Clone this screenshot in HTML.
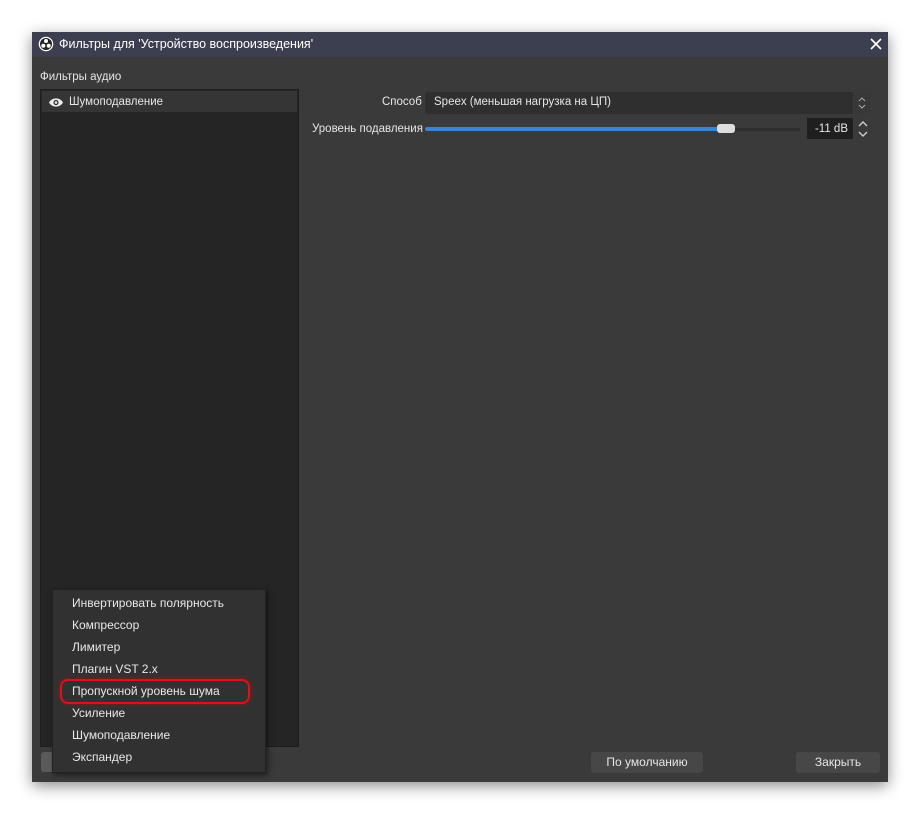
<!DOCTYPE html>
<html><head><meta charset="utf-8"><style>
body{margin:0;width:920px;height:815px;background:#fff;position:relative;overflow:hidden;font-family:"Liberation Sans","Noto Sans CJK SC",sans-serif;font-size:12px;color:#e6e6e6}
.a{position:absolute}
.win{left:32px;top:32px;width:856px;height:750px;background:#3a3a3a;box-shadow:0 4px 14px rgba(0,0,0,.45)}
.title{left:0;top:0;width:856px;height:25px;background:#3c3f4f;color:#fff;font-size:12.5px}
.list{left:8px;top:57px;width:257px;height:656px;background:#252525;border:1px solid #1e1e1e}
.item{left:1px;top:1px;width:255px;height:21px;background:#353535}
.combo{left:393px;top:60px;width:446px;height:22px;background:#2f2f2f;border-radius:3px}
.btn{background:#474747;border-radius:3px;text-align:center;line-height:21px;height:21px}
.menu{left:52px;top:589px;width:212px;height:182px;background:#313131;border:1px solid #222;box-shadow:2px 2px 5px rgba(0,0,0,.5)}
.menu div{position:absolute;left:19px;font-size:12px;color:#e8e8e8}
</style></head><body>
<div class="a win">
 <div class="a title">
  <svg class="a" style="left:6px;top:4px" width="16" height="16" viewBox="0 0 16 16"><circle cx="8" cy="8" r="7.3" fill="#fff"/><circle cx="8" cy="8" r="6" fill="#222"/><circle cx="8" cy="5" r="2" fill="#fff"/><circle cx="5.3" cy="9.8" r="2" fill="#fff"/><circle cx="10.7" cy="9.8" r="2" fill="#fff"/></svg>
  <span class="a" style="left:27px;top:5px">Фильтры для 'Устройство воспроизведения'</span>
  <svg class="a" style="left:838px;top:6px" width="12" height="12"><path d="M1 1L11 11M11 1L1 11" stroke="#fff" stroke-width="1.6"/></svg>
 </div>
 <span class="a" style="left:8px;top:39px;font-size:11.5px">Фильтры аудио</span>
 <div class="a list"><div class="a item">
  <svg class="a" style="left:6px;top:6px" width="16" height="11" viewBox="0 0 16 11"><path d="M1 5.5C4 0 12 0 15 5.5C12 11 4 11 1 5.5Z" fill="#eee"/><circle cx="8" cy="5.5" r="2.6" fill="#353535"/><circle cx="8" cy="5.5" r="1.3" fill="#eee"/></svg>
  <span class="a" style="left:27px;top:5px;font-size:11.5px">Шумоподавление</span></div></div>
 <span class="a" style="left:350px;top:64px;font-size:11.5px">Способ</span>
 <div class="a combo"><span class="a" style="left:9px;top:4px;font-size:11.5px">Speex (меньшая нагрузка на ЦП)</span>
  <div class="a" style="right:0;top:0;width:18px;height:22px;background:#383838"><svg width="18" height="22"><path d="M6 9L9 6L12 9M6 13L9 16L12 13" stroke="#aaa" stroke-width="1" fill="none"/></svg></div></div>
 <span class="a" style="left:280px;top:91px;font-size:11.5px">Уровень подавления</span>
 <div class="a" style="left:393px;top:95px;width:300px;height:4px;background:#3a84d0;border-radius:2px"></div>
 <div class="a" style="left:693px;top:96px;width:75px;height:3px;background:#2d2d2d"></div>
 <div class="a" style="left:685px;top:92px;width:18px;height:9px;background:#ddd;border-radius:3px"></div>
 <div class="a" style="left:775px;top:86px;width:46px;height:21px;background:#1f1f1f"><span class="a" style="right:5px;top:5px;font-size:11.5px">-11 dB</span></div>
 <svg class="a" style="left:824px;top:87px" width="14" height="20"><path d="M3 7L7 3L11 7M3 13L7 17L11 13" stroke="#ccc" stroke-width="1.4" fill="none"/></svg>
 <div class="a" style="left:9px;top:720px;width:20px;height:20px;background:#5a5a5a;border-radius:3px"></div>
 <div class="a btn" style="left:559px;top:720px;width:112px">По умолчанию</div>
 <div class="a btn" style="left:764px;top:720px;width:84px">Закрыть</div>
</div>
<div class="a menu">
 <div style="top:6px">Инвертировать полярность</div>
 <div style="top:28px">Компрессор</div>
 <div style="top:50px">Лимитер</div>
 <div style="top:72px">Плагин VST 2.x</div>
 <div style="top:94px">Пропускной уровень шума</div>
 <div style="top:116px">Усиление</div>
 <div style="top:138px">Шумоподавление</div>
 <div style="top:160px">Экспандер</div>
</div>
<div class="a" style="left:60px;top:679px;width:186px;height:21px;border:2.5px solid #e0101a;border-radius:8px;box-shadow:0 0 4px rgba(230,0,0,.6)"></div>
</body></html>
